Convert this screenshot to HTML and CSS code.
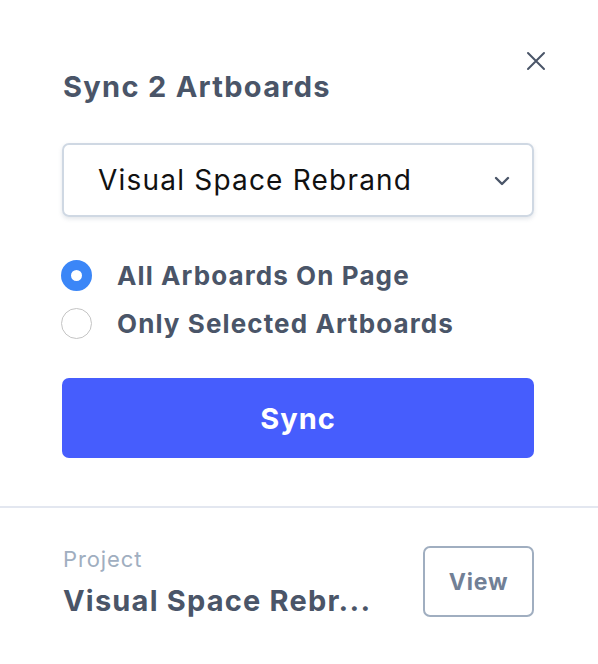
FILE: index.html
```html
<!DOCTYPE html>
<html lang="en">
<head>
<meta charset="utf-8">
<title>Sync Artboards</title>
<link rel="stylesheet" href="styles.css">
</head>
<body>
<div class="panel">
  <section class="main">
    <div class="header">
      <h1 class="title">Sync 2 Artboards</h1>
      <button class="close" aria-label="Close">
        <svg width="20" height="20" viewBox="0 0 20 20"><path d="M2 2 L18 18 M18 2 L2 18" stroke="#4a5568" stroke-width="2" stroke-linecap="round" fill="none"/></svg>
      </button>
    </div>
    <div class="select">
      <span class="select-text">Visual Space Rebrand</span>
      <svg class="chevron" width="16" height="10" viewBox="0 0 16 10"><path d="M2 2 L8 8 L14 2" stroke="#4a5568" stroke-width="2.4" stroke-linecap="round" stroke-linejoin="round" fill="none"/></svg>
    </div>
    <div class="options">
      <label class="option"><span class="radio checked"></span><span class="option-label">All Arboards On Page</span></label>
      <label class="option"><span class="radio"></span><span class="option-label">Only Selected Artboards</span></label>
    </div>
    <button class="sync">Sync</button>
  </section>
  <section class="footer">
    <div class="project">
      <div class="project-caption">Project</div>
      <div class="project-name">Visual Space Rebr...</div>
    </div>
    <button class="view">View</button>
  </section>
</div>
</body>
</html>
```

FILE: styles.css
```css
* { box-sizing: border-box; }
html, body { margin: 0; padding: 0; background: #fff; }
body { font-family: Inter, "Noto Sans", sans-serif; width: 598px; }
.main { padding: 51px 64px 48px 62px; }
.header { display: flex; justify-content: space-between; align-items: flex-start; }
.title { margin: 19px 0 0 1px; font-size: 29px; line-height: 34px; font-weight: 700; color: #4a5568; letter-spacing: 1.3px; }
.close { border: 0; background: none; padding: 0; margin-right: -12px; width: 20px; height: 20px; display: flex; }
.select { margin-top: 39px; height: 74px; border: 2px solid #cfd8e3; border-radius: 7px; display: flex; align-items: center; justify-content: space-between; padding: 0 22px 0 34px; box-shadow: 0 2px 4px rgba(100,116,139,0.18); }
.select-text { font-size: 28px; color: #111; font-weight: 400; letter-spacing: 1.2px; }
.chevron { margin-top: 2px; }
.options { margin-top: 34px; display: flex; flex-direction: column; }
.option { height: 48px; display: flex; align-items: center; gap: 25px; }
.radio { width: 31px; height: 31px; border-radius: 50%; border: 1.5px solid #c4c4c4; flex: none; margin-left: -1px; background: #fff; }
.radio.checked { border: 10.5px solid #3b86f7; background: #fff; }
.option-label { font-size: 26px; font-weight: 700; color: #4a5568; letter-spacing: 1.1px; }
.sync { display: block; width: 100%; margin-top: 31px; height: 80px; border: 0; border-radius: 7px; background: #465dfd; color: #fff; font-family: inherit; font-size: 29px; font-weight: 700; letter-spacing: 1px; }
.footer { border-top: 2px solid #e3e7f0; padding: 38px 64px 0 63px; display: flex; justify-content: space-between; align-items: flex-start; }
.project-caption { font-size: 22px; line-height: 24px; color: #a0aec0; margin-top: 1px; letter-spacing: 0.9px; }
.project-name { margin-top: 13px; font-size: 29px; line-height: 34px; font-weight: 700; color: #4a5568; letter-spacing: 1.2px; }
.view { width: 111px; height: 71px; border: 2px solid #a0aec0; border-radius: 7px; background: #fff; color: #718096; font-family: inherit; font-size: 23px; font-weight: 700; letter-spacing: 0.8px; }
```
